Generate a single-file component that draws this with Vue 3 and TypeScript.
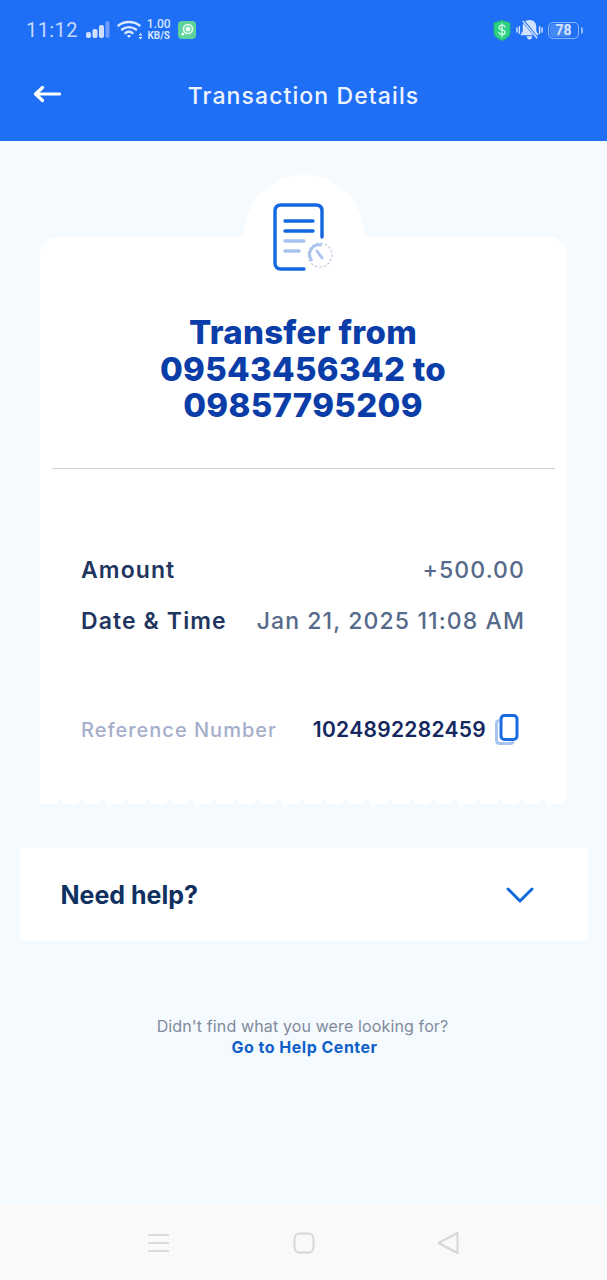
<script setup lang="ts">
const details = [
  { label: 'Amount', value: '+500.00' },
  { label: 'Date & Time', value: 'Jan 21, 2025 11:08 AM' },
]
</script>

<template>
  <div class="page">
    <header class="header">
      <div class="status">
        <div class="status-left">
          <span class="clock">11:12</span>
          <svg class="signal" width="24" height="18" viewBox="0 0 24 18">
            <rect x="0" y="11" width="5" height="6" rx="2" fill="#cfe0ff" />
            <rect x="6.500" y="8" width="5" height="9" rx="2" fill="#cfe0ff" />
            <rect x="13" y="4" width="5" height="13" rx="2" fill="#cfe0ff" />
            <rect x="19.500" y="0" width="4" height="17" rx="2" fill="#6f9ffa" />
          </svg>
          <svg class="wifi" width="26" height="20" viewBox="0 0 26 20" fill="none" stroke="#dce8ff" stroke-width="2.400" stroke-linecap="round">
            <path d="M1.500 5.500C7 .8 17 .8 22.500 5.500" />
            <path d="M5 9.500c4-3.200 10-3.200 14 0" />
            <path d="M8.500 13c2-1.400 5-1.400 7 0" />
            <path d="M12 18l-2.200-2.400c1.200-.8 3.200-.8 4.400 0z" fill="#dce8ff" stroke="none" />
            <path d="M23.500 13l-2 2.400h4zM23.500 19.500l-2-2.400h4z" fill="#dce8ff" stroke="none" />
          </svg>
          <span class="speed"><b>1.00</b><i>KB/S</i></span>
          <span class="app-badge">
            <svg width="14" height="14" viewBox="0 0 14 14">
              <circle cx="8" cy="6" r="4.500" fill="none" stroke="#eafff3" stroke-width="1.500" />
              <circle cx="8" cy="6" r="2.500" fill="#eafff3" />
              <circle cx="2.800" cy="11" r="1.600" fill="#eafff3" />
            </svg>
          </span>
        </div>
        <div class="status-right">
          <svg width="18" height="21" viewBox="0 0 18 21">
            <path d="M9 .5l8 2.500v9.500c0 3.500-4 6.500-8 8-4-1.500-8-4.500-8-8V3z" fill="#2fcf86" stroke="#1fb873" />
            <path d="M12 7c-.5-1.300-1.700-1.800-3-1.800-1.600 0-3 .7-3 2.300 0 3.300 6.100 1.500 6.100 4.700 0 1.500-1.500 2.300-3.100 2.300-1.400 0-2.700-.6-3.200-2M9 3.800v13" fill="none" stroke="#d6ffe9" stroke-width="1.300" stroke-linecap="round" />
          </svg>
          <svg class="bell" width="27" height="22" viewBox="0 0 28 22">
            <path d="M14 .5c4.500 0 7 3 7 7v4.500l2.500 4.500h-19L7 12V7.500C7 3.500 9.500.5 14 .5zM11 17.500h6c-.4 2-1.600 3.500-3 3.500s-2.600-1.500-3-3.500z" fill="#d3e2ff" />
            <path d="M7 1l15 18.500" stroke="#2070f5" stroke-width="3" />
            <path d="M7 1.500l15 18" stroke="#d3e2ff" stroke-width="1.500" />
            <path d="M1 9v4M3.500 7.500v7M24.500 7.500v7M27 9v4" stroke="#d3e2ff" stroke-width="1.500" stroke-linecap="round" />
          </svg>
          <span class="battery"><span class="battery-fill" />78</span>
        </div>
      </div>
      <div class="titlebar">
        <svg class="back" width="28" height="18" viewBox="0 0 28 18" fill="none" stroke="#fff" stroke-width="3.200" stroke-linecap="round" stroke-linejoin="round">
          <path d="M26.500 9H3M9.500 2.500L2.500 9l7 6.500" />
        </svg>
        <h1>Transaction Details</h1>
      </div>
    </header>

    <main class="content">
      <section class="card">
        <div class="bump" />
        <svg class="doc" width="62" height="70" viewBox="0 0 62 70" fill="none" stroke-linecap="round">
          <path d="M32 67H9c-4 0-6-2-6-6V9c0-4 2-6 6-6h35c4 0 6 2 6 6v26" stroke="#1268e0" stroke-width="3.400" />
          <path d="M13 19h28M13 29h28" stroke="#1268e0" stroke-width="3.400" />
          <path d="M13 39h19M13 49h14" stroke="#a9c3ee" stroke-width="3.400" />
          <path d="M39.500 58a9.500 9.500 0 0 1 9-15" stroke="#a9c3ee" stroke-width="2.800" />
          <path d="M45 49l5 7" stroke="#a9c3ee" stroke-width="2.800" />
          <circle cx="48" cy="53" r="12" stroke="#b9c9de" stroke-width="1.200" stroke-dasharray="1.400 3" />
        </svg>
        <h2>Transfer from<br>09543456342 to<br>09857795209</h2>
        <hr class="divider">
        <dl class="rows">
          <div v-for="row in details" :key="row.label" class="row">
            <dt>{{ row.label }}</dt>
            <dd>{{ row.value }}</dd>
          </div>
        </dl>
        <div class="reference">
          <span class="ref-label">Reference Number</span>
          <span class="ref-value">1024892282459</span>
          <svg class="copy" width="26" height="32" viewBox="0 0 26 32" fill="none">
            <path d="M4 6.500c-1.800.3-2.500 1.200-2.500 3V26c0 2.500 1 3.500 3.500 3.500h10c1.800 0 2.800-.6 3.200-2" stroke="#a8c5f2" stroke-width="3" />
            <rect x="6" y="1.500" width="16" height="24" rx="3.500" stroke="#1a6ae0" stroke-width="3" />
          </svg>
        </div>
      </section>

      <section class="help">
        <span>Need help?</span>
        <svg width="28" height="18" viewBox="0 0 28 18" fill="none" stroke="#1268e0" stroke-width="3" stroke-linecap="round" stroke-linejoin="round">
          <path d="M2 3l12 12L26 3" />
        </svg>
      </section>

      <p class="footnote">
        Didn't find what you were looking for?
        <a>Go to Help Center</a>
      </p>
    </main>

    <nav class="navbar">
      <svg width="22" height="20" viewBox="0 0 22 20" stroke="#dcdcdc" stroke-width="2">
        <path d="M0 2h21M0 10h21M0 18h21" />
      </svg>
      <svg width="22" height="22" viewBox="0 0 22 22" fill="none" stroke="#d6d6d6" stroke-width="2">
        <rect x="1.500" y="1.500" width="19" height="19" rx="5" />
      </svg>
      <svg width="22" height="24" viewBox="0 0 22 24" fill="none" stroke="#d6d6d6" stroke-width="2" stroke-linejoin="round">
        <path d="M20.500 2v20L1.500 12z" />
      </svg>
    </nav>
  </div>
</template>

<style scoped>
.page {
  width: 607px;
  height: 1280px;
  display: flex;
  flex-direction: column;
  background: #f5fafe;
  font-family: Inter, Lato, sans-serif;
  overflow: hidden;
}
.header {
  height: 141px;
  background: #1e6ff5;
  color: #fff;
  flex: none;
}
.status {
  height: 60px;
  padding: 0 28px 0 26px;
  display: flex;
  align-items: center;
  justify-content: space-between;
}
.status-left,
.status-right {
  display: flex;
  align-items: center;
}
.clock {
  font-family: Roboto, sans-serif;
  font-size: 20px;
  letter-spacing: 0.4px;
  color: #c4d8ff;
}
.signal {
  margin-left: 8px;
}
.wifi {
  margin-left: 7px;
}
.speed {
  display: flex;
  flex-direction: column;
  align-items: center;
  margin-left: 4px;
  font-family: Roboto, sans-serif;
  color: #d5e3ff;
  line-height: 11px;
}
.speed b {
  font-size: 12px;
  font-weight: 500;
}
.speed i {
  font-size: 10px;
  font-style: normal;
  font-weight: 700;
}
.app-badge {
  width: 18px;
  height: 18px;
  margin-left: 7px;
  border-radius: 4px;
  background: #5ed39c;
  display: flex;
  align-items: center;
  justify-content: center;
}
.status-right {
  gap: 5px;
}
.battery {
  position: relative;
  width: 29px;
  height: 15px;
  border: 1.500px solid #8db5fb;
  border-radius: 5px;
  font-family: Roboto, sans-serif;
  font-size: 14px;
  font-weight: 700;
  line-height: 15px;
  color: #cfdfff;
  text-align: center;
}
.battery::after {
  content: "";
  position: absolute;
  right: -5px;
  top: 4px;
  width: 2px;
  height: 7px;
  border-radius: 0 2px 2px 0;
  background: #8db5fb;
}
.battery-fill {
  position: absolute;
  left: 1px;
  top: 1px;
  bottom: 1px;
  width: 21px;
  border-radius: 3px;
  background: rgba(255, 255, 255, 0.18);
}
.titlebar {
  position: relative;
  height: 70px;
  display: flex;
  align-items: center;
  justify-content: center;
}
.back {
  position: absolute;
  left: 33px;
  top: 25px;
}
h1 {
  margin: 2px 0 0;
  font-size: 23px;
  font-weight: 500;
  letter-spacing: 1.1px;
  color: #eef4ff;
}
.content {
  flex: 1;
  display: flex;
  flex-direction: column;
  align-items: center;
  padding-top: 96px;
}
.card {
  position: relative;
  width: 526px;
  height: 563px;
  margin-right: 1px;
  box-sizing: border-box;
  padding-top: 1px;
  background: #fff;
  border-radius: 16px 16px 0 0;
  display: flex;
  flex-direction: column;
  align-items: center;
}
.card::after {
  content: "";
  position: absolute;
  left: 0;
  right: 0;
  bottom: -4px;
  height: 5px;
  background:
    linear-gradient(135deg, #fff 50%, transparent 50%) 0 0 / 11px 5px repeat-x,
    linear-gradient(225deg, #fff 50%, transparent 50%) 11px 0 / 22px 5px repeat-x;
}
.bump {
  position: absolute;
  left: 204px;
  top: -62px;
  width: 120px;
  height: 120px;
  border-radius: 50%;
  background: #fff;
}
.doc {
  position: relative;
  margin-top: -36px;
  margin-left: 0;
}
h2 {
  margin: 42px 0 0;
  font-size: 33px;
  font-weight: 800;
  line-height: 36.500px;
  letter-spacing: 0.3px;
  color: #0a3da8;
  text-align: center;
}
.divider {
  width: 503px;
  height: 1px;
  margin: 44px 0 0;
  border: 0;
  background: #cfd2d6;
}
.rows {
  width: 444px;
  margin: 87px 0 0;
  display: flex;
  flex-direction: column;
  gap: 23px;
}
.row {
  display: flex;
  align-items: center;
  justify-content: space-between;
  height: 28px;
  font-size: 23px;
  letter-spacing: 1.1px;
}
dt {
  font-weight: 600;
  color: #1f3660;
}
dd {
  margin: 0;
  color: #566a8a;
  font-weight: 500;
}
.reference {
  width: 444px;
  margin-top: 80px;
  display: flex;
  align-items: center;
  height: 30px;
}
.ref-label {
  font-size: 20px;
  letter-spacing: 1px;
  font-weight: 500;
  color: #a4aecb;
}
.ref-value {
  margin-left: auto;
  font-size: 21px;
  font-weight: 600;
  letter-spacing: 0.3px;
  color: #14275f;
}
.copy {
  margin-left: 9px;
  margin-right: 4px;
}
.help {
  width: 568px;
  height: 93px;
  margin-top: 48px;
  padding: 0 54px 0 41px;
  box-sizing: border-box;
  display: flex;
  align-items: center;
  justify-content: space-between;
  background: #fff;
  border-radius: 4px;
  font-size: 25px;
  font-weight: 700;
  color: #10305f;
}
.footnote {
  margin: 75px 2px 0 0;
  display: flex;
  flex-direction: column;
  align-items: center;
  font-size: 16px;
  line-height: 21px;
  letter-spacing: 0.13px;
  color: #7f8a9c;
}
.footnote a {
  margin-left: 4px;
  font-weight: 700;
  letter-spacing: 0.5px;
  color: #0f5fc9;
}
.navbar {
  flex: none;
  height: 75px;
  padding: 0 148px 0 148px;
  display: flex;
  align-items: center;
  justify-content: space-between;
  background: #f9f9f9;
}
</style>
